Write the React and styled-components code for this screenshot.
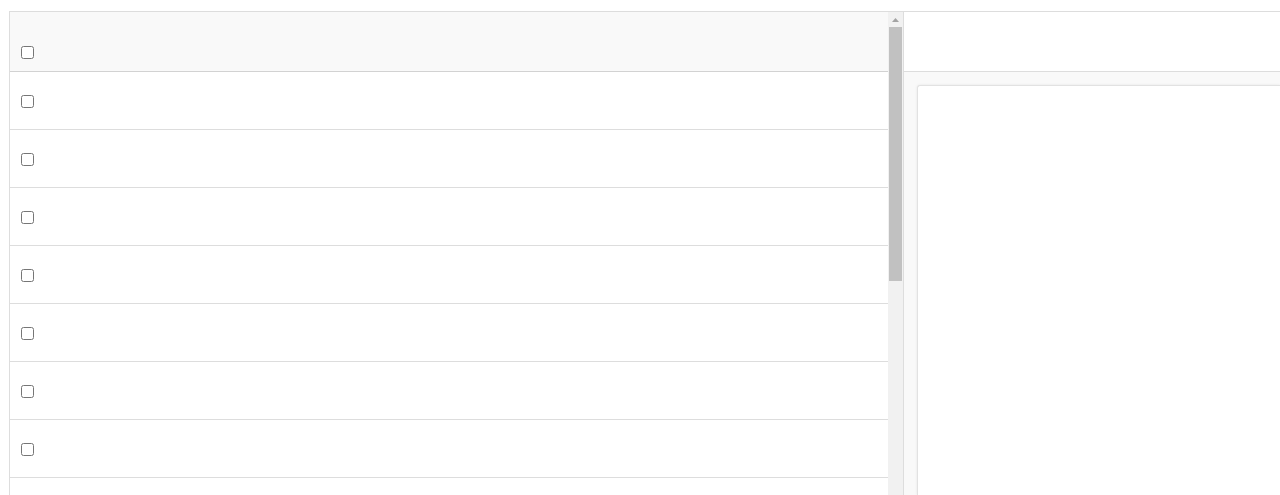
import React from "react";
import styled, { createGlobalStyle } from "styled-components";

const GlobalStyle = createGlobalStyle`
  html, body {
    margin: 0;
    height: 100%;
    overflow: hidden;
    background: #fff;
    font-family: "Liberation Sans", Arial, sans-serif;
  }
`;

const Page = styled.div`
  display: flex;
  padding: 11px 0 0 9px;
  height: 100vh;
  box-sizing: border-box;
`;

const GridPanel = styled.div`
  display: flex;
  width: 893px;
  flex-shrink: 0;
  border-top: 1px solid #dddddd;
  border-left: 1px solid #dddddd;
  overflow: hidden;
`;

const Table = styled.div`
  flex: 1;
  display: flex;
  flex-direction: column;
`;

const HeaderRow = styled.div`
  display: flex;
  align-items: flex-end;
  height: 47px;
  padding: 0 0 12px 11px;
  background: #f9f9f9;
  border-bottom: 1px solid #d2d2d2;
  flex-shrink: 0;
`;

const Row = styled.div`
  display: flex;
  align-items: flex-start;
  height: 34px;
  padding: 23px 0 0 11px;
  border-bottom: 1px solid #dddddd;
  flex-shrink: 0;
`;

const Check = styled.input.attrs({ type: "checkbox" })`
  margin: 0;
  width: 13px;
  height: 13px;
`;

const ScrollBar = styled.div`
  width: 15px;
  flex-shrink: 0;
  background: #f1f1f1;
  display: flex;
  flex-direction: column;
  align-items: center;
`;

const ArrowButton = styled.div`
  height: 15px;
  width: 15px;
  display: flex;
  align-items: center;
  justify-content: center;
`;

const Thumb = styled.div`
  width: 13px;
  height: 254px;
  background: #c1c1c1;
`;

const SidePanel = styled.div`
  flex: 1;
  display: flex;
  flex-direction: column;
  border-top: 1px solid #dddddd;
  border-left: 1px solid #dddddd;
`;

const SideHeader = styled.div`
  height: 59px;
  background: #fff;
  border-bottom: 1px solid #dddddd;
  flex-shrink: 0;
`;

const SideBody = styled.div`
  flex: 1;
  background: #f9f9f9;
  padding: 13px 0 0 13px;
  display: flex;
`;

const Card = styled.div`
  flex: 1;
  background: #fff;
  border: 1px solid #e2e2e2;
  border-right: none;
  border-bottom: none;
  border-radius: 3px 0 0 0;
  box-shadow: 0 0 3px rgba(0, 0, 0, 0.08);
`;

const rows = Array.from({ length: 8 }, (_, i) => i);

export default function App() {
  return (
    <>
      <GlobalStyle />
      <Page>
        <GridPanel>
          <Table>
            <HeaderRow>
              <Check />
            </HeaderRow>
            {rows.map((r) => (
              <Row key={r}>
                <Check />
              </Row>
            ))}
          </Table>
          <ScrollBar>
            <ArrowButton>
              <svg width="7" height="4" viewBox="0 0 7 4">
                <path d="M3.5 0 L7 4 L0 4 Z" fill="#a3a3a3" />
              </svg>
            </ArrowButton>
            <Thumb />
          </ScrollBar>
        </GridPanel>
        <SidePanel>
          <SideHeader />
          <SideBody>
            <Card />
          </SideBody>
        </SidePanel>
      </Page>
    </>
  );
}
